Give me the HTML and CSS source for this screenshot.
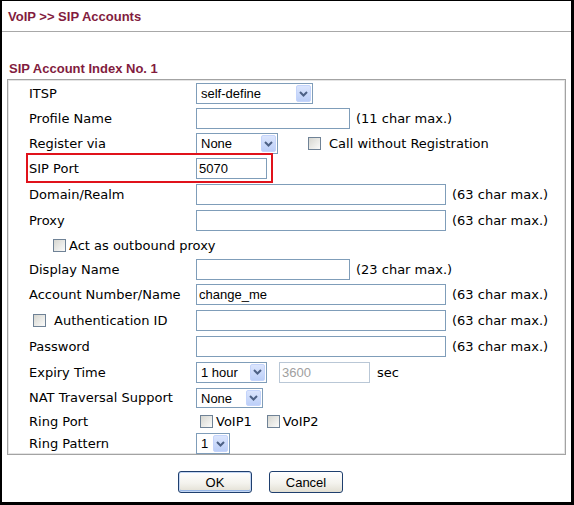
FILE: index.html
```html
<!DOCTYPE html>
<html>
<head>
<meta charset="utf-8">
<title>VoIP &gt;&gt; SIP Accounts</title>
<link rel="stylesheet" href="styles.css">
</head>
<body>
<div class="frame">
  <div class="title">VoIP &gt;&gt; SIP Accounts</div>
  <div class="rule"></div>
  <div class="subtitle">SIP Account Index No. 1</div>
  <div class="box">
    <div class="row h25">
      <div class="label">ITSP</div>
      <div class="field">
        <div class="sel sel-itsp"><span class="sel-text">self-define</span><span class="sel-btn"><svg width="9" height="6" viewBox="0 0 9 6"><path d="M1 1 L4.5 4.5 L8 1" fill="none" stroke="#4d6185" stroke-width="2"/></svg></span></div>
      </div>
    </div>
    <div class="row h25">
      <div class="label">Profile Name</div>
      <div class="field"><input class="input in-m" type="text" value=""><span class="note">(11 char max.)</span></div>
    </div>
    <div class="row h25">
      <div class="label">Register via</div>
      <div class="field">
        <div class="sel sel-reg"><span class="sel-text">None</span><span class="sel-btn"><svg width="9" height="6" viewBox="0 0 9 6"><path d="M1 1 L4.5 4.5 L8 1" fill="none" stroke="#4d6185" stroke-width="2"/></svg></span></div>
        <input class="cb cb-call" type="checkbox"><span class="cb-text cb-text-wide">Call without Registration</span>
      </div>
    </div>
    <div class="row h25">
      <div class="label">SIP Port</div>
      <div class="field"><input class="input in-s" type="text" value="5070"></div>
      <div class="highlight"></div>
    </div>
    <div class="row h26">
      <div class="label">Domain/Realm</div>
      <div class="field"><input class="input in-l" type="text" value=""><span class="note">(63 char max.)</span></div>
    </div>
    <div class="row h26">
      <div class="label">Proxy</div>
      <div class="field"><input class="input in-l" type="text" value=""><span class="note">(63 char max.)</span></div>
    </div>
    <div class="row h24">
      <input class="cb cb-act" type="checkbox"><span class="cb-text">Act as outbound proxy</span>
    </div>
    <div class="row h24">
      <div class="label">Display Name</div>
      <div class="field"><input class="input in-m" type="text" value=""><span class="note">(23 char max.)</span></div>
    </div>
    <div class="row h26">
      <div class="label">Account Number/Name</div>
      <div class="field"><input class="input in-l" type="text" value="change_me"><span class="note">(63 char max.)</span></div>
    </div>
    <div class="row h26">
      <div class="label label-cb"><input class="cb cb-auth" type="checkbox"><span class="cb-text cb-text-wide">Authentication ID</span></div>
      <div class="field"><input class="input in-l" type="text" value=""><span class="note">(63 char max.)</span></div>
    </div>
    <div class="row h26">
      <div class="label">Password</div>
      <div class="field"><input class="input in-l" type="password" value=""><span class="note">(63 char max.)</span></div>
    </div>
    <div class="row h26">
      <div class="label">Expiry Time</div>
      <div class="field">
        <div class="sel sel-exp"><span class="sel-text">1 hour</span><span class="sel-btn"><svg width="9" height="6" viewBox="0 0 9 6"><path d="M1 1 L4.5 4.5 L8 1" fill="none" stroke="#4d6185" stroke-width="2"/></svg></span></div>
        <input class="input in-sec" type="text" value="3600" disabled><span class="unit">sec</span>
      </div>
    </div>
    <div class="row h25">
      <div class="label">NAT Traversal Support</div>
      <div class="field">
        <div class="sel sel-nat"><span class="sel-text">None</span><span class="sel-btn"><svg width="9" height="6" viewBox="0 0 9 6"><path d="M1 1 L4.5 4.5 L8 1" fill="none" stroke="#4d6185" stroke-width="2"/></svg></span></div>
      </div>
    </div>
    <div class="row h23">
      <div class="label">Ring Port</div>
      <div class="field">
        <input class="cb cb-ring" type="checkbox"><span class="cb-text">VoIP1</span>
        <input class="cb cb-ring2" type="checkbox"><span class="cb-text">VoIP2</span>
      </div>
    </div>
    <div class="row h21">
      <div class="label">Ring Pattern</div>
      <div class="field">
        <div class="sel sel-pat"><span class="sel-text">1</span><span class="sel-btn"><svg width="9" height="6" viewBox="0 0 9 6"><path d="M1 1 L4.5 4.5 L8 1" fill="none" stroke="#4d6185" stroke-width="2"/></svg></span></div>
      </div>
    </div>
  </div>
  <div class="actions">
    <button class="btn btn-default" type="button">OK</button>
    <button class="btn" type="button">Cancel</button>
  </div>
</div>
</body>
</html>
```
FILE: styles.css
```css
body {
  margin: 0;
  background: #fff;
  font-family: "DejaVu Sans", Verdana, sans-serif;
  font-size: 13px;
  color: #000;
}

.frame {
  box-sizing: border-box;
  width: 574px;
  height: 505px;
  border-style: solid;
  border-color: #000;
  border-width: 1px 3px 3px 2px;
  overflow: hidden;
  background: #fff;
}

.title {
  padding: 8px 0 0 6px;
  font: bold 13px/15px "Liberation Sans", Arial, sans-serif;
  color: #821c3e;
}

.rule {
  margin-top: 7px;
  border-top: 1px solid #a8a8a8;
}

.subtitle {
  margin-top: 29px;
  padding-left: 7px;
  font: bold 13px/15px "Liberation Sans", Arial, sans-serif;
  color: #821c3e;
}

.box {
  margin: 3px 0 0 5px;
  width: 559px;
  box-sizing: border-box;
  border: 1px solid #a3a3a3;
  box-shadow: inset 1px 1px 0 #e4e4e4, inset -1px -1px 0 #e4e4e4;
  padding-top: 1px;
}

.row {
  display: flex;
  align-items: center;
  padding-left: 21px;
  position: relative;
}

.h21 { height: 21px; }
.h23 { height: 23px; }
.h24 { height: 24px; }
.h25 { height: 25px; }
.h26 { height: 26px; }

.label {
  width: 167px;
  flex: none;
  line-height: 15px;
  white-space: nowrap;
}

.label-cb {
  display: flex;
  align-items: center;
}

.field {
  display: flex;
  align-items: center;
  white-space: nowrap;
}

.input {
  box-sizing: border-box;
  height: 21px;
  margin: 0;
  padding: 0 2px;
  border: 1px solid #7f9db9;
  background: #fff;
  font: 13px "Liberation Sans", Arial, sans-serif;
  color: #000;
  outline: none;
}

.in-s { width: 71px; }
.in-m { width: 154px; }
.in-l { width: 250px; }
.in-sec {
  width: 91px;
  margin-left: 12px;
  color: #a0a0a0;
  border-color: #b9c7d6;
}

.note {
  margin-left: 6px;
  line-height: 15px;
}

.unit {
  margin-left: 7px;
  line-height: 15px;
}

.sel {
  box-sizing: border-box;
  display: flex;
  align-items: stretch;
  height: 21px;
  padding: 1px;
  border: 1px solid #7f9db9;
  background: #fff;
}

.sel-itsp { width: 117px; }
.sel-reg { width: 82px; }
.sel-exp { width: 71px; }
.sel-nat { width: 67px; height: 20px; }
.sel-pat { width: 34px; }

.sel-text {
  flex: 1;
  padding-left: 3px;
  font: 13px/17px "Liberation Sans", Arial, sans-serif;
  overflow: hidden;
  white-space: nowrap;
}

.sel-btn {
  flex: none;
  width: 15px;
  box-sizing: border-box;
  border: 1px solid #c4d4fb;
  border-radius: 2px;
  background: linear-gradient(#dbe5fd, #bccff8);
  display: flex;
  align-items: center;
  justify-content: center;
}

.sel-btn svg {
  display: block;
}

.cb {
  appearance: none;
  -webkit-appearance: none;
  flex: none;
  box-sizing: border-box;
  width: 13px;
  height: 13px;
  margin: 0;
  border: 1px solid #6f8296;
  background: linear-gradient(135deg, #d6d6d0, #fbfbfa);
}

.cb-text {
  margin-left: 3px;
  line-height: 15px;
}

.cb-text-wide {
  margin-left: 8px;
}

.cb-call { margin-left: 30px; }
.cb-act { margin-left: 24px; }
.cb-auth { margin-left: 4px; }
.cb-ring { margin-left: 4px; }
.cb-ring2 { margin-left: 15px; }

.highlight {
  position: absolute;
  left: 18px;
  top: -3px;
  width: 247px;
  height: 30px;
  box-sizing: border-box;
  border: 2px solid #e0121b;
  pointer-events: none;
}

.actions {
  display: flex;
  gap: 17px;
  margin: 16px 0 0 176px;
}

.btn {
  box-sizing: border-box;
  width: 74px;
  height: 22px;
  margin: 0;
  padding: 0;
  border: 1px solid #1f3f6e;
  border-radius: 3px;
  background: linear-gradient(#ffffff, #f4f3ee 55%, #e2dfd3);
  font: 13px "Liberation Sans", Arial, sans-serif;
  color: #000;
}

.btn-default {
  box-shadow: inset 0 0 0 1px #c3d6f3, inset 0 -1px 0 1px #97b6e6;
}
```
